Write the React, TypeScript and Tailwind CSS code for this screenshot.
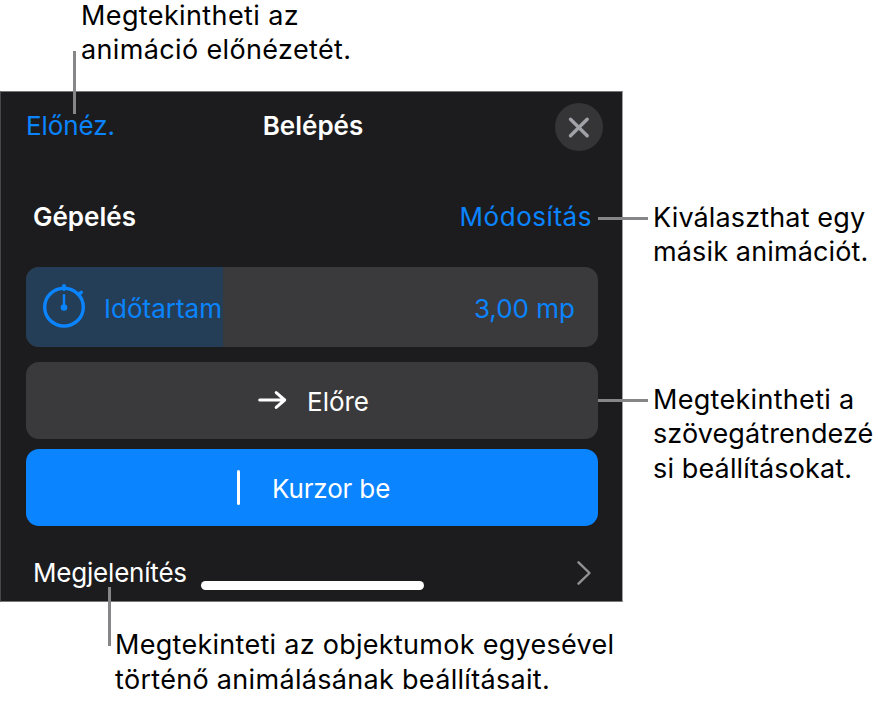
import React from 'react';

interface CalloutProps {
  lines: { text: string; className: string }[];
}

const Callout: React.FC<CalloutProps> = ({ lines }) => (
  <p className="text-[27px] leading-[34.5px] text-black whitespace-nowrap">
    {lines.map((line) => (
      <span key={line.text} className={`block ${line.className}`}>{line.text}</span>
    ))}
  </p>
);

const CloseIcon: React.FC = () => (
  <svg className="w-12 h-12" viewBox="0 0 48 48" fill="none">
    <path d="M15.5 16.2 32.2 32.8M32.2 16.2 15.5 32.8" stroke="#a1a1a8" strokeWidth="3.4" strokeLinecap="round" />
  </svg>
);

const StopwatchIcon: React.FC = () => (
  <svg className="w-12 h-12 shrink-0" viewBox="0 0 48 48" fill="none" stroke="#0a84ff" strokeLinecap="round">
    <ellipse cx="24" cy="24.2" rx="19.3" ry="18.9" strokeWidth="3.4" />
    <path d="M24 3v3" strokeWidth="4" />
    <path d="M38.5 11.5 41.2 9.4" strokeWidth="3.6" />
    <path d="M24 12.3v12" strokeWidth="2.4" />
    <circle cx="24" cy="24.5" r="3.3" fill="#0a84ff" stroke="none" />
  </svg>
);

const ArrowIcon: React.FC = () => (
  <svg className="w-[30px] h-6" viewBox="0 0 30 24" fill="none" stroke="#fff" strokeWidth="3" strokeLinecap="round" strokeLinejoin="round">
    <path d="M1.7 11h25M18.2 3.6 26.7 11l-8.5 7.4" />
  </svg>
);

const ChevronIcon: React.FC = () => (
  <svg className="w-4 h-7" viewBox="0 0 16 28" fill="none" stroke="#929295" strokeWidth="2.4" strokeLinecap="round" strokeLinejoin="round">
    <path d="M2.5 3.3 13.5 14 2.5 24.7" />
  </svg>
);

const AnimationPanel: React.FC = () => (
  <section className="relative w-[623px] h-[511px] shrink-0 bg-[#1c1c1e] border border-[#77777a] border-l-[#48484a] border-r-[#a0a0a2] text-[26px] leading-8 text-white whitespace-nowrap">
    <header className="flex items-center justify-between h-[69px] pl-[25px] pr-[19px]">
      <button className="w-[90px] pb-px text-left text-[#0a84ff] tracking-[-0.1px]">Előnéz.</button>
      <h1 className="pb-px pr-px font-semibold">Belépés</h1>
      <div className="w-[92px] flex justify-end">
        <button className="rounded-full bg-[#353538]">
          <CloseIcon />
        </button>
      </div>
    </header>

    <div className="flex items-center justify-between h-[60px] mt-[26px] pl-8 pr-[30px]">
      <h2 className="font-semibold">Gépelés</h2>
      <button className="text-[#0a84ff] tracking-[0.55px]">Módosítás</button>
    </div>

    <div className="mt-5 ml-[25px] w-[572px] flex flex-col">
      <div className="flex h-20 rounded-[13px] overflow-hidden bg-[#3a3a3c] text-[#0a84ff]">
        <div className="flex items-center w-[197px] pl-3.5 bg-[#253e57]">
          <StopwatchIcon />
          <span className="ml-4 pt-[3px]">Időtartam</span>
        </div>
        <div className="flex flex-1 items-center justify-end pt-[3px] pr-[23px]">3,00 mp</div>
      </div>
      <button className="flex items-center h-[77px] mt-[15px] pl-[232px] rounded-[13px] bg-[#3a3a3c]">
        <ArrowIcon />
        <span className="ml-[19px] pt-[3px]">Előre</span>
      </button>
      <button className="flex items-center h-[77px] mt-2.5 pl-[211px] rounded-[13px] bg-[#0a84ff]">
        <span className="w-[3px] h-[35px] rounded-full bg-white" />
        <span className="ml-8 pt-0.5 tracking-[-0.15px]">Kurzor be</span>
      </button>
    </div>

    <div className="flex items-center justify-between h-10 mt-[27px] pl-8 pr-[30px]">
      <span className="tracking-[-0.2px]">Megjelenítés</span>
      <ChevronIcon />
    </div>
    <div className="absolute left-[200px] bottom-[11px] w-[223px] h-[9px] rounded-full bg-white" />

    {/* leader lines */}
    <div className="absolute left-[72px] -top-[41px] w-[3px] h-[63px] bg-[#868688]" />
    <div className="absolute left-[597px] top-[125px] w-[50px] h-[3px] bg-[#868688]" />
    <div className="absolute left-[597px] top-[307px] w-[50px] h-[3px] bg-[#868688]" />
    <div className="absolute left-[107px] top-[495px] w-[3px] h-[59px] bg-[#868688]" />
  </section>
);

const App: React.FC = () => {
  return (
    <main className="w-[878px] h-[702px] overflow-hidden bg-white font-['Inter',sans-serif]">
      <div className="flex items-start h-[91px] pl-[81px]">
        <div className="-mt-[1.5px]">
          <Callout
            lines={[
              { text: 'Megtekintheti az', className: 'tracking-[0.38px]' },
              { text: 'animáció előnézetét.', className: 'tracking-[0.36px]' },
            ]}
          />
        </div>
      </div>

      <div className="flex">
        <AnimationPanel />
        <aside className="flex flex-col gap-[113px] pt-[109.5px] pl-[30px]">
          <Callout
            lines={[
              { text: 'Kiválaszthat egy', className: 'tracking-[0.14px]' },
              { text: 'másik animációt.', className: 'tracking-[0.14px]' },
            ]}
          />
          <Callout
            lines={[
              { text: 'Megtekintheti a', className: 'tracking-[0.3px]' },
              { text: 'szövegátrendezé', className: 'tracking-[0.1px]' },
              { text: 'si beállításokat.', className: 'tracking-[0.14px]' },
            ]}
          />
        </aside>
      </div>

      <div className="pt-[26px] pl-[115px]">
        <Callout
          lines={[
            { text: 'Megtekinteti az objektumok egyesével', className: 'tracking-[0.28px]' },
            { text: 'történő animálásának beállításait.', className: 'tracking-[0.31px]' },
          ]}
        />
      </div>
    </main>
  );
};

export default App;
